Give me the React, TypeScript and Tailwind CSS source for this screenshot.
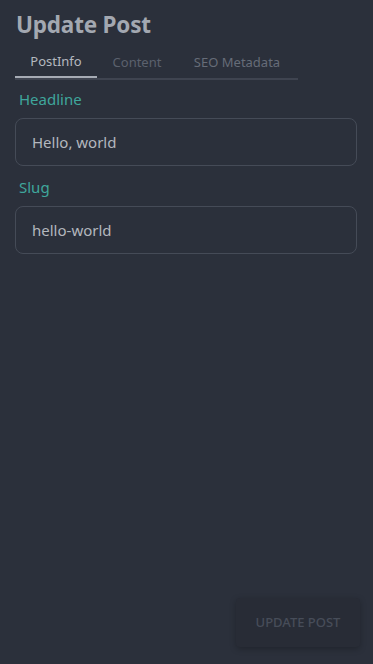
import React from "react";

export default function App() {
  return (
    <div
      className="w-[373px] h-[664px] bg-[#2b303b] flex flex-col px-[15px]"
      style={{ fontFamily: '"Noto Sans", "Open Sans", sans-serif' }}
    >
      <h1 className="text-[22.5px] font-bold text-[#a3a8b1] mt-[9px] leading-[32px] pl-[1px] tracking-[-0.2px]">Update Post</h1>
      <div className="flex w-[283px] border-b-2 border-[#3f4450] mt-[6px] text-[13px]">
        <div className="w-[82px] h-[31px] flex items-center justify-center text-[#b4b8bf] border-b-2 border-[#a6abb4] -mb-[2px]">PostInfo</div>
        <div className="w-[80px] h-[31px] flex items-center justify-center text-[#5b616d]">Content</div>
        <div className="w-[120px] h-[31px] flex items-center justify-center text-[#666c78]">SEO Metadata</div>
      </div>
      <label className="text-[15px] text-[#3fa69c] mt-[8px] pl-[4px] leading-[22px]">Headline</label>
      <div className="mt-[8px] h-[48px] w-[342px] rounded-[8px] border border-[#454b57] flex items-center px-[16px] text-[15px] text-[#b3b7be]">Hello, world</div>
      <label className="text-[15px] text-[#3fa69c] mt-[10px] pl-[4px] leading-[22px]">Slug</label>
      <div className="mt-[8px] h-[48px] w-[342px] rounded-[8px] border border-[#454b57] flex items-center px-[16px] text-[15px] text-[#b3b7be]">hello-world</div>
      <div className="flex-1" />
      <div className="flex justify-end -mr-[2px] mb-[17px]">
        <button className="w-[124px] h-[49px] rounded-[4px] bg-[#282c36] text-[13px] font-medium text-[#474d59] shadow-[0_2px_6px_rgba(0,0,0,0.25)]">UPDATE POST</button>
      </div>
    </div>
  );
}
